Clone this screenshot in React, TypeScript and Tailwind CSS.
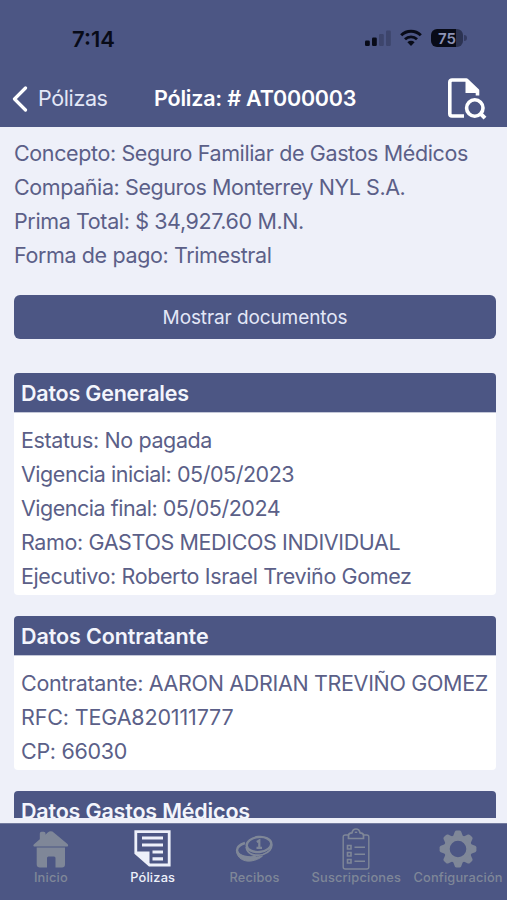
import { ReactNode } from 'react';
import { clsx } from 'clsx';

interface Line {
  text: string;
  spacing?: string;
}

interface Section {
  title: string;
  spacing?: string;
  lines: Line[];
}

const summary: Line[] = [
  { text: 'Concepto: Seguro Familiar de Gastos Médicos' },
  { text: 'Compañia: Seguros Monterrey NYL S.A.', spacing: 'tracking-[-0.41px]' },
  { text: 'Prima Total: $ 34,927.60 M.N.' },
  { text: 'Forma de pago: Trimestral' },
];

const sections: Section[] = [
  {
    title: 'Datos Generales',
    spacing: 'tracking-[-0.22px]',
    lines: [
      { text: 'Estatus: No pagada' },
      { text: 'Vigencia inicial: 05/05/2023', spacing: 'tracking-[-0.46px]' },
      { text: 'Vigencia final: 05/05/2024', spacing: 'tracking-[-0.48px]' },
      { text: 'Ramo: GASTOS MEDICOS INDIVIDUAL' },
      { text: 'Ejecutivo: Roberto Israel Treviño Gomez' },
    ],
  },
  {
    title: 'Datos Contratante',
    lines: [
      { text: 'Contratante: AARON ADRIAN TREVIÑO GOMEZ', spacing: 'tracking-[-0.33px]' },
      { text: 'RFC: TEGA820111777', spacing: 'tracking-[-0.15px]' },
      { text: 'CP: 66030', spacing: 'tracking-[-0.3px]' },
    ],
  },
  { title: 'Datos Gastos Médicos', spacing: 'tracking-[-0.18px]', lines: [] },
];

function TextLine({ line }: { line: Line }) {
  return (
    <p className={clsx('h-[34px] whitespace-nowrap text-[21.5px] leading-[34px]', line.spacing ?? 'tracking-[-0.38px]')}>
      {line.text}
    </p>
  );
}

function StatusBar() {
  return (
    <div className="flex h-[70px] items-start justify-between pr-[40px] pl-[72px] text-[#080b18]">
      <span className="mt-[23px] text-[22px] leading-[32px] font-semibold">7:14</span>
      <div className="mt-[29px] flex items-center">
        <svg width="26" height="18" viewBox="0 0 26 18" fill="currentColor">
          <rect x="0" y="11.5" width="4.8" height="5.5" rx="1.3" />
          <rect x="7" y="8.5" width="4.8" height="8.5" rx="1.3" />
          <rect x="14" y="5" width="4.8" height="12" rx="1.3" opacity="0.22" />
          <rect x="21" y="1.5" width="4.8" height="15.5" rx="1.3" opacity="0.22" />
        </svg>
        <svg className="ml-[9px]" width="22" height="18" viewBox="0 0 22 18" fill="none" stroke="currentColor">
          <path d="M1.2 6.2a14 14 0 0 1 19.6 0" strokeWidth="3" />
          <path d="M5 10.3a8.6 8.6 0 0 1 12 0" strokeWidth="2.8" />
          <path d="M11 17l-3.6-3.7a5.2 5.2 0 0 1 7.2 0z" fill="currentColor" stroke="none" />
        </svg>
        <div className="ml-[9px] flex h-[18px] w-[32px] items-center justify-center rounded-[6px] bg-linear-to-r from-[#080b18] from-78% to-[#2c3352] to-78% text-[15px] leading-none font-semibold text-[#8d93b5]">
          75
        </div>
        <span className="ml-[1px] h-[6px] w-[3px] rounded-r-full bg-[#343b60]" />
      </div>
    </div>
  );
}

function Header() {
  return (
    <header className="flex h-[57px] items-center px-3 text-white">
      <svg className="shrink-0" width="16" height="26" viewBox="0 0 16 26" fill="none" stroke="currentColor" strokeWidth="3.2" strokeLinecap="round" strokeLinejoin="round">
        <path d="M13.5 2L2.5 13l11 11" />
      </svg>
      <span className="ml-[10px] w-[116px] whitespace-nowrap text-[21.5px] tracking-[-0.38px] text-[#e3e7f7]">Pólizas</span>
      <h1 className="text-[21.5px] font-semibold tracking-[-0.2px] whitespace-nowrap">Póliza: # AT000003</h1>
      <svg className="mr-[8px] ml-auto" width="40" height="42" viewBox="0 0 40 42" fill="none" stroke="currentColor" strokeWidth="3.6">
        <path d="M17 38H5a2.2 2.2 0 0 1-2.2-2.2V4.2A2.2 2.2 0 0 1 5 2h14.5L30.5 12.5v5" strokeLinejoin="round" />
        <path d="M18.5 2v13h13v-2.5L20.5 2z" fill="currentColor" stroke="none" />
        <circle cx="27.8" cy="30" r="8.2" />
        <path d="M33 35.200l5 5" strokeWidth="4" />
      </svg>
    </header>
  );
}

function SectionCard({ section }: { section: Section }) {
  return (
    <section className="mb-[21px] shrink-0 overflow-hidden rounded-[4px] bg-white">
      <h2
        className={clsx(
          'h-[39px] bg-[#4c5684] px-[7px] text-[21.5px] leading-[40px] font-semibold whitespace-nowrap text-[#f3f5fc]',
          section.spacing ?? 'tracking-[-0.1px]'
        )}
      >
        {section.title}
      </h2>
      {section.lines.length > 0 && (
        <div className="border-t border-[#c3c7d7] px-[7px] pt-[10px] pb-[2px]">
          {section.lines.map((line) => (
            <TextLine key={line.text} line={line} />
          ))}
        </div>
      )}
    </section>
  );
}

const HomeIcon = () => (
  <svg width="36" height="38" viewBox="0 0 36 38" fill="currentColor">
    <path d="M1 16.500Q-.3 15.500 1 14.200L6.800 9.200V3.500Q6.800 1.800 8.500 1.800H10.800Q12.500 1.800 12.500 3.300V4.800L14.700 2.500Q18 0 21 2.800L34.500 14Q35.800 15.500 34.500 16.500z" />
    <path d="M3.700 17.500H32V34.500Q32 37.500 29 37.500H22.500V28Q22.500 26.500 21 26.500H15.500Q14 26.500 14 28V37.500H7Q3.700 37.500 3.700 34.500z" />
  </svg>
);

const PolicyIcon = () => (
  <svg width="37" height="37" viewBox="0 0 37 37" fill="none" stroke="currentColor">
    <path d="M1.800 23V1.600h33.400v33.400H15.500z" strokeWidth="2.800" />
    <path d="M.8 21.500h14.700V36z" fill="currentColor" stroke="none" />
    <path d="M8 8h21M8 15h21M18.500 22h10.500M18.500 28.800h10.500" strokeWidth="3.200" />
  </svg>
);

const CoinsIcon = () => (
  <svg width="38" height="28" viewBox="0 0 38 28" fill="none" stroke="currentColor">
    <ellipse cx="24" cy="9.500" rx="12.300" ry="7.500" strokeWidth="2.400" transform="rotate(-6 24 9.500)" />
    <path d="M11.200 12C12 19.500 20 21.500 28 19.500 34 17.500 37.500 13.500 36.500 9" strokeWidth="1.800" />
    <path d="M10 8C4 10 1.500 13.500 2.200 16.500 4 21.500 13 23.500 21 22" strokeWidth="2.400" />
    <path d="M1.500 15.500C1.500 23 9 27 16 26 21 25.300 25 23.500 27.500 21 16 23.500 6 23 1.500 15.500z" fill="currentColor" strokeWidth="1" />
    <path d="M21.800 7l2.500-1.500v7.200M21.500 12.900h5.500" strokeWidth="2.200" />
  </svg>
);

const ClipboardIcon = () => (
  <svg width="28" height="42" viewBox="0 0 28 42" fill="none" stroke="currentColor" strokeWidth="1.400">
    <path d="M7 7H3.200Q1.200 7 1.200 9v30q0 2 2 2h21.600q2 0 2-2V9q0-2-2-2H21" />
    <path d="M6.500 10.500V7.500Q6.500 5 10 4.800 10.800 1 14 1t4 3.800Q21.500 5 21.500 7.500v3z" strokeWidth="1.700" />
    <path d="M12.800 4.300h2.400" />
    <path d="M5.500 17.500h3.500v3.500H5.500zM5.500 24.500h3.500V28H5.500zM5.500 31.500h3.500V35H5.500z" strokeWidth="1.600" />
    <path d="M12.500 19.200h10.500M12.500 26.200h10.500M12.500 33.200h10.500" strokeWidth="1.500" />
  </svg>
);

const GearIcon = () => (
  <svg width="38" height="38" viewBox="-19 -19 38 38">
    <circle r="11.200" fill="none" stroke="currentColor" strokeWidth="5.800" />
    {[0, 45, 90, 135, 180, 225, 270, 315].map((angle) => (
      <path key={angle} d="M-5-12.500L-3.200-17.200Q-2.700-18.400-1.500-18.400H1.500Q2.700-18.400 3.200-17.200L5-12.500z" fill="currentColor" transform={`rotate(${angle})`} />
    ))}
  </svg>
);

interface Tab {
  label: string;
  icon: ReactNode;
  active?: boolean;
}

const tabs: Tab[] = [
  { label: 'Inicio', icon: <HomeIcon /> },
  { label: 'Pólizas', icon: <PolicyIcon />, active: true },
  { label: 'Recibos', icon: <CoinsIcon /> },
  { label: 'Suscripciones', icon: <ClipboardIcon /> },
  { label: 'Configuración', icon: <GearIcon /> },
];

function TabBar() {
  return (
    <nav className="grid h-[77px] w-[509px] shrink-0 grid-cols-5 border-t border-[#737b9e] bg-[#4c5684]">
      {tabs.map((tab) => (
        <div key={tab.label} className={clsx('flex flex-col items-center', tab.active ? 'text-[#edf0fa]' : 'text-[#7f8798]')}>
          <div className="mt-[4px] flex h-[43px] items-center justify-center pb-[2px]">{tab.icon}</div>
          <span className="mt-[-1px] text-[12.8px] leading-[16px] font-medium tracking-[0.2px] whitespace-nowrap">{tab.label}</span>
        </div>
      ))}
    </nav>
  );
}

export default function App() {
  return (
    <div className="flex h-[900px] w-[507px] flex-col overflow-hidden bg-[#eef0f9] font-['Inter',sans-serif] text-[#5b5f88]">
      <div className="h-[127px] shrink-0 bg-[#4c5684]">
        <StatusBar />
        <Header />
      </div>
      <main className="flex h-[691px] shrink-0 flex-col overflow-hidden pt-[9px] pr-[11px] pl-[14px]">
        <div className="shrink-0">
          {summary.map((line) => (
            <TextLine key={line.text} line={line} />
          ))}
        </div>
        <button className="mt-[23px] mb-[34px] h-[44px] shrink-0 rounded-[6px] bg-[#4c5684] pt-[2px] text-[19px] tracking-[-0.1px] text-[#e3e7f7]">
          Mostrar documentos
        </button>
        {sections.map((section) => (
          <SectionCard key={section.title} section={section} />
        ))}
      </main>
      <div className="h-[5px] shrink-0" />
      <TabBar />
    </div>
  );
}
